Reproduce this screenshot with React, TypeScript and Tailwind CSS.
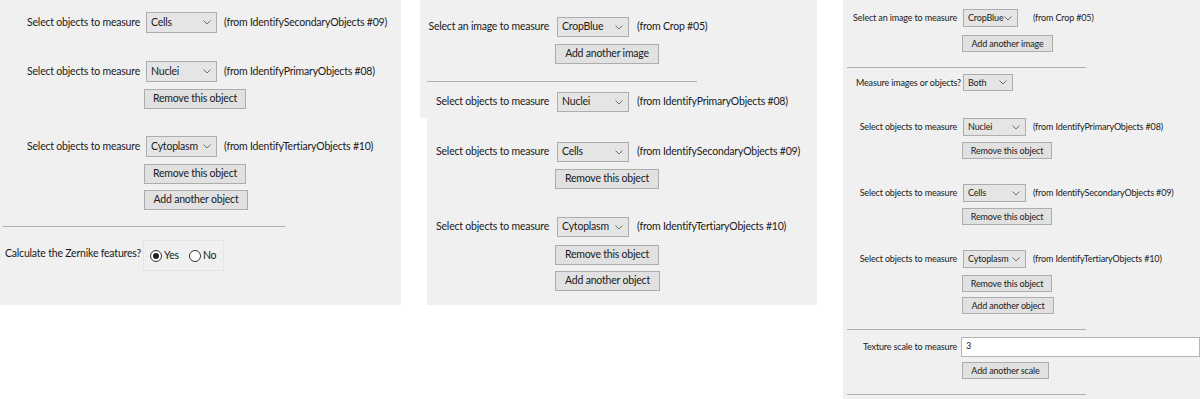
import React from "react";

// Windows-style settings panels, three side by side

function Chevron() {
  return (
    <svg width="8" height="5" viewBox="0 0 8 5" className="shrink-0">
      <path d="M0.5 0.5 L4 4 L7.5 0.5" fill="none" stroke="#6e6e6e" strokeWidth="1" />
    </svg>
  );
}

function Combo({ value, className }: { value: string; className: string }) {
  return (
    <div
      className={`flex items-center justify-between border border-[#adadad] bg-[#e5e5e5] pl-[4px] pr-[5px] ${className}`}
    >
      <span className="whitespace-nowrap">{value}</span>
      <Chevron />
    </div>
  );
}

function Btn({ label, className }: { label: string; className: string }) {
  return (
    <div className={`flex items-center justify-center whitespace-nowrap border border-[#adadad] bg-[#e1e1e1] ${className}`}>
      {label}
    </div>
  );
}

function Radio({ checked }: { checked?: boolean }) {
  return (
    <span className="flex h-[12px] w-[12px] items-center justify-center rounded-full border border-[#333] bg-white">
      {checked && <span className="h-[6px] w-[6px] rounded-full bg-[#222]" />}
    </span>
  );
}

// ── Left ─────────────────────────────────────────────────────────────────────

function LeftRow({ value, from, mt }: { value: string; from: string; mt: string }) {
  return (
    <div className={`flex h-[21px] items-center whitespace-nowrap ${mt}`}>
      <span className="w-[140px] text-right">Select objects to measure</span>
      <Combo value={value} className="ml-[6px] h-[21px] w-[71px]" />
      <span className="ml-[7px]">{from}</span>
    </div>
  );
}

function LeftPanel() {
  return (
    <div className="h-[305px] w-[401px] shrink-0 bg-[#f0f0f0] pt-[12px] text-[10.5px] tracking-[-0.2px]">
      <LeftRow value="Cells" from="(from IdentifySecondaryObjects #09)" mt="mt-0" />
      <LeftRow value="Nuclei" from="(from IdentifyPrimaryObjects #08)" mt="mt-[28px]" />
      <Btn label="Remove this object" className="ml-[144px] mt-[7px] h-[20px] w-[102px]" />
      <LeftRow value="Cytoplasm" from="(from IdentifyTertiaryObjects #10)" mt="mt-[27px]" />
      <Btn label="Remove this object" className="ml-[144px] mt-[7px] h-[20px] w-[102px]" />
      <Btn label="Add another object" className="ml-[144px] mt-[6px] h-[20px] w-[104px]" />
      <div className="ml-[3px] mt-[16px] h-px w-[282px] bg-[#b0b0b0]" />
      <div className="mt-[13px] flex items-start whitespace-nowrap">
        <span className="ml-[5px] mt-[6px] w-[138px]">Calculate the Zernike features?</span>
        <div className="flex h-[31px] w-[81px] items-center border border-[#e4e4e4] pl-[6px]">
          <Radio checked />
          <span className="ml-[2px]">Yes</span>
          <span className="ml-[10px]" />
          <Radio />
          <span className="ml-[2px]">No</span>
        </div>
      </div>
    </div>
  );
}

// ── Middle ───────────────────────────────────────────────────────────────────

function MidRow({ label, value, from, labelW, mt }: { label: string; value: string; from: string; labelW: string; mt: string }) {
  return (
    <div className={`flex h-[20px] items-center whitespace-nowrap ${mt}`}>
      <span className={`text-right ${labelW}`}>{label}</span>
      <Combo value={value} className="ml-[8px] h-[20px] w-[72px]" />
      <span className="ml-[8px]">{from}</span>
    </div>
  );
}

function MiddlePanel() {
  return (
    <div className="ml-[19px] w-[397px] shrink-0 text-[10.5px] tracking-[-0.2px]">
      <div className="h-[118px] bg-[#f0f0f0] pt-[17px]">
        <MidRow label="Select an image to measure" value="CropBlue" from="(from Crop #05)" labelW="w-[129px]" mt="mt-0" />
        <Btn label="Add another image" className="ml-[135px] mt-[7px] h-[20px] w-[104px]" />
        <div className="ml-[7px] mt-[17px] h-px w-[270px] bg-[#b0b0b0]" />
        <MidRow label="Select objects to measure" value="Nuclei" from="(from IdentifyPrimaryObjects #08)" labelW="w-[129px]" mt="mt-[10px]" />
      </div>
      <div className="ml-[7px] h-[187px] bg-[#f0f0f0] pt-[24px]">
        <MidRow label="Select objects to measure" value="Cells" from="(from IdentifySecondaryObjects #09)" labelW="w-[122px]" mt="mt-0" />
        <Btn label="Remove this object" className="ml-[128px] mt-[7px] h-[20px] w-[104px]" />
        <MidRow label="Select objects to measure" value="Cytoplasm" from="(from IdentifyTertiaryObjects #10)" labelW="w-[122px]" mt="mt-[28px]" />
        <Btn label="Remove this object" className="ml-[128px] mt-[8px] h-[20px] w-[104px]" />
        <Btn label="Add another object" className="ml-[128px] mt-[6px] h-[20px] w-[105px]" />
      </div>
    </div>
  );
}

// ── Right ────────────────────────────────────────────────────────────────────

function RightRow({ label, value, from, selW, mt }: { label: string; value: string; from: string; selW: string; mt: string }) {
  return (
    <div className={`flex h-[18px] items-center whitespace-nowrap ${mt}`}>
      <span className="w-[114px] text-right">{label}</span>
      <Combo value={value} className={`ml-[6px] h-[18px] ${selW}`} />
      <span className="ml-[7px]">{from}</span>
    </div>
  );
}

function RightPanel() {
  return (
    <div className="ml-[26px] h-[399px] w-[357px] shrink-0 overflow-hidden bg-[#f0f0f0] pt-[9px] text-[9px] tracking-[-0.15px]">
      <div className="flex h-[18px] items-center whitespace-nowrap">
        <span className="w-[114px] text-right">Select an image to measure</span>
        <Combo value="CropBlue" className="ml-[6px] h-[18px] w-[55px]" />
        <span className="ml-[15px]">(from Crop #05)</span>
      </div>
      <Btn label="Add another image" className="ml-[119px] mt-[8px] h-[17px] w-[91px]" />
      <div className="ml-[4px] mt-[15px] h-px w-[239px] bg-[#b0b0b0]" />
      <div className="mt-[6px] flex h-[17px] items-center whitespace-nowrap">
        <span className="w-[118px] text-right">Measure images or objects?</span>
        <Combo value="Both" className="ml-[2px] h-[17px] w-[50px]" />
      </div>
      <RightRow label="Select objects to measure" value="Nuclei" from="(from IdentifyPrimaryObjects #08)" selW="w-[63px]" mt="mt-[27px]" />
      <Btn label="Remove this object" className="ml-[119px] mt-[6px] h-[17px] w-[90px]" />
      <RightRow label="Select objects to measure" value="Cells" from="(from IdentifySecondaryObjects #09)" selW="w-[63px]" mt="mt-[25px]" />
      <Btn label="Remove this object" className="ml-[119px] mt-[6px] h-[17px] w-[90px]" />
      <RightRow label="Select objects to measure" value="Cytoplasm" from="(from IdentifyTertiaryObjects #10)" selW="w-[63px]" mt="mt-[25px]" />
      <Btn label="Remove this object" className="ml-[119px] mt-[7px] h-[17px] w-[90px]" />
      <Btn label="Add another object" className="ml-[119px] mt-[5px] h-[17px] w-[92px]" />
      <div className="ml-[4px] mt-[15px] h-px w-[239px] bg-[#b0b0b0]" />
      <div className="mt-[7px] flex h-[20px] items-stretch whitespace-nowrap">
        <span className="flex w-[114px] items-center justify-end">Texture scale to measure</span>
        <div className="ml-[4px] flex-1 border border-[#b5b5b5] bg-white pl-[4px] pt-[1px]">3</div>
      </div>
      <Btn label="Add another scale" className="ml-[119px] mt-[5px] h-[17px] w-[87px]" />
      <div className="ml-[4px] mt-[15px] h-px w-[239px] bg-[#b0b0b0]" />
    </div>
  );
}

export default function App() {
  return (
    <div className="flex h-[399px] w-[1200px] items-start overflow-hidden bg-white font-['Lato','Noto_Sans',sans-serif] text-[#1a1a1a]">
      <LeftPanel />
      <MiddlePanel />
      <RightPanel />
    </div>
  );
}
